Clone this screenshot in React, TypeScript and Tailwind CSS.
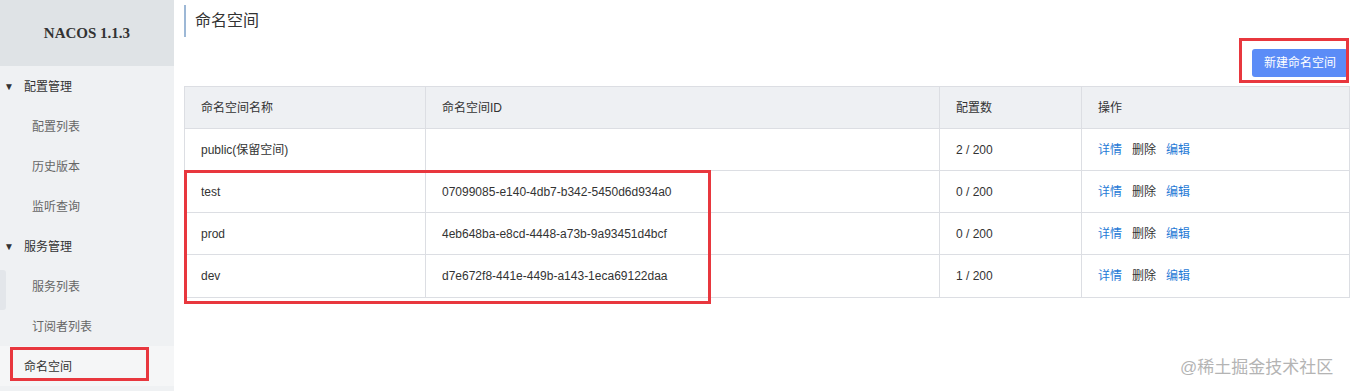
import React from "react";

const font = { fontFamily: '"Liberation Sans", "Noto Sans CJK SC", sans-serif' };

const menu = [
  { label: "配置管理", group: true },
  { label: "配置列表" },
  { label: "历史版本" },
  { label: "监听查询" },
  { label: "服务管理", group: true },
  { label: "服务列表" },
  { label: "订阅者列表" },
  { label: "命名空间", active: true },
];

const rows = [
  { name: "public(保留空间)", id: "", count: "2 / 200" },
  { name: "test", id: "07099085-e140-4db7-b342-5450d6d934a0", count: "0 / 200" },
  { name: "prod", id: "4eb648ba-e8cd-4448-a73b-9a93451d4bcf", count: "0 / 200" },
  { name: "dev", id: "d7e672f8-441e-449b-a143-1eca69122daa", count: "1 / 200" },
];

function Sidebar() {
  return (
    <div className="relative w-[174px] h-[391px] bg-[#eff1f3] shrink-0">
      <div className="h-[66px] bg-[#dfe3e6] flex items-center justify-center">
        <span className="text-[15px] font-bold text-[#333]" style={{ fontFamily: '"Liberation Serif", serif' }}>
          NACOS 1.1.3
        </span>
      </div>
      {menu.map((m) => (
        <div
          key={m.label}
          className={`h-[40px] flex items-center text-[12px] pt-[1px] ${m.group ? "pl-[4px] text-[#333]" : m.active ? "pl-[24px] text-[#333] bg-[#f5f6f7]" : "pl-[32px] text-[#666]"}`}
        >
          {m.group && <span className="text-[10px] w-[20px] text-[#333]">▼</span>}
          {m.label}
        </div>
      ))}
      {/* scroll handle */}
      <div className="absolute left-0 top-[270px] w-[6px] h-[40px] bg-[#e3e6ea] rounded-r-[3px]" />
      {/* annotation */}
      <div className="absolute left-[10px] top-[347px] w-[139px] h-[34px] border-[3px] border-[#e8373e]" />
    </div>
  );
}

function Table() {
  const cell = "px-[16px] border-r border-[#dcdee3] last:border-r-0 flex items-center";
  return (
    <div className="border border-[#dcdee3] text-[12px] text-[#333]">
      <div className="grid grid-cols-[241px_514px_142px_1fr] h-[42px] bg-[#eef0f3] border-b border-[#dcdee3]">
        <div className={cell}>命名空间名称</div>
        <div className={cell}>命名空间ID</div>
        <div className={cell}>配置数</div>
        <div className={cell}>操作</div>
      </div>
      {rows.map((r, i) => (
        <div
          key={r.name}
          className={`grid grid-cols-[241px_514px_142px_1fr] h-[42px] ${i < rows.length - 1 ? "border-b border-[#dcdee3]" : ""}`}
        >
          <div className={cell}>{r.name}</div>
          <div className={cell}>{r.id}</div>
          <div className={cell}>{r.count}</div>
          <div className={`${cell} gap-[10px]`}>
            <span className="text-[#1f7ad6]">详情</span>
            <span className="text-[#333]">删除</span>
            <span className="text-[#1f7ad6]">编辑</span>
          </div>
        </div>
      ))}
    </div>
  );
}

export default function App() {
  return (
    <div className="relative w-[1354px] h-[391px] bg-white flex overflow-hidden" style={font}>
      <Sidebar />
      <div className="flex-1 pl-[10px] pr-[4px] pt-[5px]">
        <div className="h-[32px] border-l-2 border-[#9db8d6] pl-[9px] flex items-center text-[16px] text-[#333]">
          命名空间
        </div>
        <div className="flex justify-end pt-[12px] pb-[9px] pr-[2px]">
          <button className="h-[28px] px-[12px] bg-[#5b8cf7] text-white text-[12px] rounded-[3px]">
            新建命名空间
          </button>
        </div>
        <Table />
      </div>
      {/* annotations */}
      <div className="absolute left-[1239px] top-[38px] w-[110px] h-[45px] border-[3px] border-[#e8373e]" />
      <div className="absolute left-[184px] top-[170px] w-[527px] h-[134px] border-[3px] border-[#e8373e]" />
      <div className="absolute left-[1180px] top-[355px] text-[17px] text-[#b4b4b4]">@稀土掘金技术社区</div>
    </div>
  );
}
